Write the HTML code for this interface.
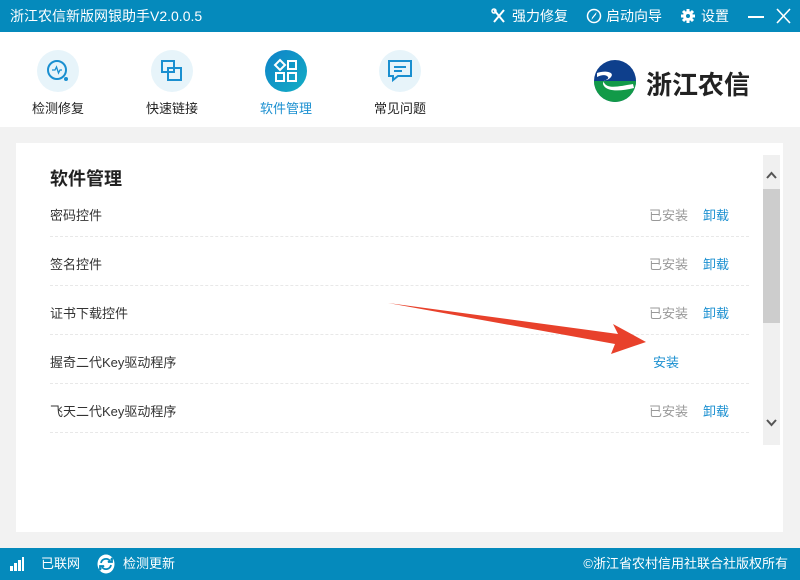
<!DOCTYPE html>
<html><head><meta charset="utf-8"><style>
*{margin:0;padding:0;box-sizing:border-box}
body{width:800px;height:580px;overflow:hidden;background:#f2f2f2;font-family:"Liberation Sans","Noto Sans CJK SC",sans-serif;position:relative}
.top{position:absolute;left:0;top:0;width:800px;height:32px;background:#058abc;color:#fff}
.t{position:absolute;top:7px;font-size:14px;line-height:18px;white-space:nowrap}
.hdr{position:absolute;left:0;top:32px;width:800px;height:95px;background:#fff}
.nav{position:absolute;width:100px;text-align:center}
.circ{width:42px;height:42px;border-radius:50%;background:#e7f4fa;margin:0 auto;display:flex;align-items:center;justify-content:center}
.nav .lb{font-size:13px;color:#222;margin-top:6px}
.card{position:absolute;left:16px;top:143px;width:767px;height:389px;background:#fff}
.row{position:absolute;left:34px;width:699px;height:49px;border-bottom:1px dashed #e8e8e8;font-size:13px;color:#333}
.row .n{position:absolute;left:0;top:17px}
.row .s{position:absolute;left:599px;top:17px;color:#999}
.row .u{position:absolute;left:653px;top:17px;color:#1a8fd0}
.sb{position:absolute;left:763px;top:155px;width:17px;height:290px;background:#f0f0f0}
.foot{position:absolute;left:0;top:548px;width:800px;height:32px;background:#058abc;color:#fff;font-size:13px}
</style></head><body>
<div class="top">
<div class="t" style="left:10px">浙江农信新版网银助手V2.0.0.5</div>
<svg style="position:absolute;left:491px;top:8px" width="16" height="16" viewBox="0 0 16 16"><path d="M3 2l10 12M13 2L3 14" stroke="#fff" stroke-width="2"/><circle cx="3" cy="3" r="2" fill="none" stroke="#fff" stroke-width="1.5"/></svg>
<div class="t" style="left:512px">强力修复</div>
<svg style="position:absolute;left:586px;top:8px" width="16" height="16" viewBox="0 0 16 16"><circle cx="8" cy="8" r="6.5" fill="none" stroke="#fff" stroke-width="1.5"/><path d="M10.5 4L6 9.5 5.5 12 10 6.5z" fill="#fff"/></svg>
<div class="t" style="left:606px">启动向导</div>
<svg style="position:absolute;left:680px;top:8px" width="16" height="16" viewBox="0 0 16 16"><circle cx="8" cy="8" r="5" fill="#fff"/><path d="M8 1v14M1 8h14M3 3l10 10M13 3L3 13" stroke="#fff" stroke-width="3"/><circle cx="8" cy="8" r="2" fill="#058abc"/></svg>
<div class="t" style="left:701px">设置</div>
<div style="position:absolute;left:748px;top:16px;width:16px;height:2px;background:#fff"></div>
<svg style="position:absolute;left:776px;top:8px" width="15" height="16" viewBox="0 0 15 16"><path d="M1 1l13 14M14 1L1 15" stroke="#fff" stroke-width="1.6"/></svg>
</div>
<div class="hdr">
<div class="nav" style="left:8px;top:18px"><div class="circ"><svg width="28" height="28" viewBox="0 0 28 28"><circle cx="13" cy="13" r="9" fill="none" stroke="#1a8fd0" stroke-width="2"/><path d="M8 13h3l1.5-3 2 6 1.5-3h2" fill="none" stroke="#1a8fd0" stroke-width="1.3"/><circle cx="22" cy="22" r="2" fill="#1a8fd0"/></svg></div><div class="lb">检测修复</div></div>
<div class="nav" style="left:122px;top:18px"><div class="circ"><svg width="26" height="26" viewBox="0 0 26 26"><rect x="3" y="3" width="12" height="11" fill="none" stroke="#1a8fd0" stroke-width="2"/><rect x="9" y="10" width="13" height="12" fill="none" stroke="#1a8fd0" stroke-width="2"/></svg></div><div class="lb">快速链接</div></div>
<div class="nav" style="left:236px;top:18px"><div class="circ" style="background:linear-gradient(135deg,#0f82c9,#13aec4)"><svg width="26" height="26" viewBox="0 0 26 26"><path d="M7 2l5 5-5 5-5-5z" fill="none" stroke="#fff" stroke-width="2"/><rect x="15" y="3" width="8" height="8" fill="none" stroke="#fff" stroke-width="2"/><rect x="3" y="15" width="8" height="8" fill="none" stroke="#fff" stroke-width="2"/><rect x="15" y="15" width="8" height="8" fill="none" stroke="#fff" stroke-width="2"/></svg></div><div class="lb" style="color:#1a8fd0">软件管理</div></div>
<div class="nav" style="left:350px;top:18px"><div class="circ"><svg width="26" height="26" viewBox="0 0 26 26"><path d="M2 3h22v15H11l-5 4v-4H2z" fill="none" stroke="#1a8fd0" stroke-width="2"/><path d="M7 9h12M7 13h8" stroke="#1a8fd0" stroke-width="2"/></svg></div><div class="lb">常见问题</div></div>
<svg style="position:absolute;left:593px;top:27px" width="44" height="44" viewBox="0 0 44 44"><circle cx="22" cy="22" r="21" fill="#0e3f8c"/><path d="M1 22a21 21 0 0 0 42 0z" fill="#129a48"/><path d="M4 14c8-3 18-1 14 4s-10 2-6 7 16 2 28 0l1 4c-12 3-26 4-30-2s6-6 4-9-7-2-11 0z" fill="#fff"/></svg>
<div style="position:absolute;left:646px;top:33px;font-size:26px;font-weight:bold;color:#222;letter-spacing:0px">浙江农信</div>
</div>
<div class="card">
<div style="position:absolute;left:34px;top:22px;font-size:18px;font-weight:bold;color:#222">软件管理</div>
<div class="row" style="top:45px"><span class="n">密码控件</span><span class="s">已安装</span><span class="u">卸载</span></div>
<div class="row" style="top:94px"><span class="n">签名控件</span><span class="s">已安装</span><span class="u">卸载</span></div>
<div class="row" style="top:143px"><span class="n">证书下载控件</span><span class="s">已安装</span><span class="u">卸载</span></div>
<div class="row" style="top:192px"><span class="n">握奇二代Key驱动程序</span><span class="u" style="left:603px">安装</span></div>
<div class="row" style="top:241px"><span class="n">飞天二代Key驱动程序</span><span class="s">已安装</span><span class="u">卸载</span></div>
</div>
<div class="sb"><div style="position:absolute;left:0;top:34px;width:17px;height:134px;background:#cdcdcd"></div>
<svg style="position:absolute;left:3px;top:16px" width="11" height="8"><path d="M1 7l4.5-5 4.5 5" fill="none" stroke="#555" stroke-width="2"/></svg>
<svg style="position:absolute;left:3px;top:264px" width="11" height="8"><path d="M1 1l4.5 5 4.5-5" fill="none" stroke="#555" stroke-width="2"/></svg></div>
<svg style="position:absolute;left:0;top:0" width="800" height="580"><path d="M388 303L618 334 613 324 646 342 611 354 615 344z" fill="#e8412b"/></svg>
<div class="foot">
<svg style="position:absolute;left:10px;top:9px" width="14" height="14"><rect x="0" y="9" width="3" height="5" fill="#fff"/><rect x="4" y="6" width="3" height="8" fill="#fff"/><rect x="8" y="3" width="3" height="11" fill="#fff"/><rect x="12" y="0" width="2" height="14" fill="#fff"/></svg>
<div class="t" style="left:41px;font-size:13px">已联网</div>
<svg style="position:absolute;left:97px;top:6px" width="18" height="20" viewBox="0 0 18 20"><ellipse cx="9" cy="10" rx="8.5" ry="9.5" fill="#fff"/><path d="M4 9a5 5 0 0 1 9-2l-2 1h4V4l-1 2M14 11a5 5 0 0 1-9 2l2-1H3v4l1-2" fill="none" stroke="#058abc" stroke-width="1.8"/></svg>
<div class="t" style="left:123px;font-size:13px">检测更新</div>
<div class="t" style="right:12px;font-size:13px">©浙江省农村信用社联合社版权所有</div>
</div>
</body></html>
